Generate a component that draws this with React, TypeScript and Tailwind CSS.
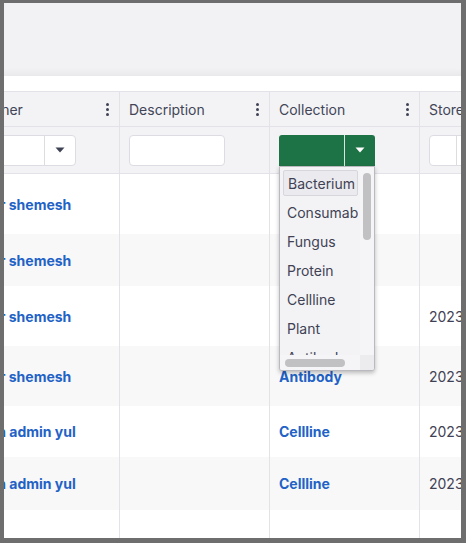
import React from "react";

const FONT = { fontFamily: "Inter, 'Liberation Sans', sans-serif" };

function Kebab() {
  return (
    <div className="flex flex-col gap-[2px] items-center mr-[10px]">
      <span className="w-[3px] h-[3px] rounded-full bg-[#3f4254]" />
      <span className="w-[3px] h-[3px] rounded-full bg-[#3f4254]" />
      <span className="w-[3px] h-[3px] rounded-full bg-[#3f4254]" />
    </div>
  );
}

function Caret({ color }: { color: string }) {
  return (
    <svg width="10" height="6" viewBox="0 0 10 6">
      <path d="M0.5 0.5 L9.5 0.5 L5 5.5 Z" fill={color} />
    </svg>
  );
}

const rows = [
  { owner: "Yair shemesh", coll: "", store: "", h: "h-[60px]", bg: "bg-white" },
  { owner: "Yair shemesh", coll: "", store: "", h: "h-[52px]", bg: "bg-[#f8f8f9]" },
  { owner: "Yair shemesh", coll: "", store: "2023-05-14", h: "h-[60px]", bg: "bg-white" },
  { owner: "Yair shemesh", coll: "Antibody", store: "2023-05-14", h: "h-[60px]", bg: "bg-[#f8f8f9]" },
  { owner: "Dan admin yul", coll: "Cellline", store: "2023-06-02", h: "h-[51px]", bg: "bg-white" },
  { owner: "Dan admin yul", coll: "Cellline", store: "2023-06-02", h: "h-[53px]", bg: "bg-[#f8f8f9]" },
  { owner: "", coll: "", store: "", h: "h-[40px]", bg: "bg-white" },
];

const items = ["Bacterium", "Consumable", "Fungus", "Protein", "Cellline", "Plant", "Antibody"];

export default function App() {
  return (
    <div className="w-[466px] h-[543px] bg-[#6e6e6e] pt-[3px] pl-[4px] pr-[5px] pb-[5px]" style={FONT}>
      <div className="w-full h-full bg-white overflow-hidden flex flex-col">
        <div className="h-[73px] shrink-0 bg-[#f2f2f4] flex flex-col justify-end">
          <div className="h-[8px] bg-gradient-to-b from-[#f2f2f4] to-[#e9e9ec]" />
        </div>
        <div className="h-[15px] shrink-0 bg-white" />
        <div className="ml-[-34px] w-[600px] flex flex-col">
          {/* header */}
          <div className="grid grid-cols-[150px_150px_150px_150px] h-[36px] border-t border-b border-[#e2e2e8] bg-[#f3f3f6] text-[14px] text-[#424556]">
            {["Owner", "Description", "Collection", "Stored at"].map((t) => (
              <div key={t} className="flex items-center justify-between pl-[9px] border-r border-[#e2e2e8]">
                <span className="whitespace-nowrap">{t}</span>
                <Kebab />
              </div>
            ))}
          </div>
          {/* filter row */}
          <div className="grid grid-cols-[150px_150px_150px_150px] h-[47px] border-b border-[#e2e2e8] bg-[#f3f3f6]">
            <div className="flex items-center pl-[9px] border-r border-[#e2e2e8]">
              <div className="w-[97px] h-[31px] bg-white border border-[#dcdce2] rounded-[4px] flex">
                <div className="flex-1 border-r border-[#dcdce2]" />
                <div className="w-[30px] flex items-center justify-center">
                  <Caret color="#3f4254" />
                </div>
              </div>
            </div>
            <div className="flex items-center pl-[9px] border-r border-[#e2e2e8]">
              <div className="w-[96px] h-[31px] bg-white border border-[#dcdce2] rounded-[4px]" />
            </div>
            <div className="flex items-center pl-[9px] border-r border-[#e2e2e8]">
              <div className="relative w-[96px] h-[31px]">
                <div className="w-full h-full bg-[#1e7346] rounded-t-[3px] flex">
                  <div className="flex-1 border-r border-[#d9e8df]" />
                  <div className="w-[30px] flex items-center justify-center">
                    <Caret color="#ffffff" />
                  </div>
                </div>
                <div className="absolute left-0 top-full w-[96px] h-[205px] z-10 bg-[#f3f3f6] border border-[#b9b9bf] rounded-b-[3px] shadow-[0_2px_4px_rgba(0,0,0,0.25)] overflow-hidden">
                  <div className="absolute left-[3px] top-[2px] w-[75px] h-[186px] overflow-hidden">
                    {items.map((it, i) => (
                      <div key={it} className="h-[29px] flex items-center">
                        <div
                          className={
                            "w-[110px] h-[26px] flex items-center pl-[4px] text-[14px] text-[#3f4254] whitespace-nowrap " +
                            (i === 0 ? "bg-[#ebebef] border border-[#d6d6dc] rounded-[2px] pl-[3px]" : "")
                          }
                        >
                          {it}
                        </div>
                      </div>
                    ))}
                  </div>
                  <div className="absolute right-0 top-0 w-[14px] h-[188px] bg-[#f5f5f7]">
                    <div className="absolute left-[3px] top-[6px] w-[8px] h-[67px] rounded-full bg-[#c1c1c4]" />
                  </div>
                  <div className="absolute left-0 bottom-0 w-[82px] h-[15px] bg-[#f5f5f7]">
                    <div className="absolute left-[5px] top-[4px] w-[60px] h-[8px] rounded-full bg-[#c1c1c4]" />
                  </div>
                  <div className="absolute right-0 bottom-0 w-[14px] h-[15px] bg-[#ececef]" />
                </div>
              </div>
            </div>
            <div className="flex items-center pl-[9px] border-r border-[#e2e2e8]">
              <div className="w-[96px] h-[31px] bg-white border border-[#dcdce2] rounded-[4px] flex">
                <div className="w-[27px] border-r border-[#dcdce2]" />
              </div>
            </div>
          </div>
          {/* data rows */}
          {rows.map((r, i) => (
            <div key={i} className={"grid grid-cols-[150px_150px_150px_150px] " + r.h + " " + r.bg}>
              <div className="flex items-center pl-[9px] border-r border-[#e2e2e8] text-[14px] font-bold text-[#2262c6] whitespace-nowrap">
                {r.owner}
              </div>
              <div className="border-r border-[#e2e2e8]" />
              <div className="flex items-center pl-[9px] border-r border-[#e2e2e8] text-[14px] font-bold text-[#2262c6] whitespace-nowrap">
                {r.coll}
              </div>
              <div className="flex items-center pl-[9px] border-r border-[#e2e2e8] text-[14px] text-[#3f4254] whitespace-nowrap">
                {r.store}
              </div>
            </div>
          ))}
        </div>
      </div>
    </div>
  );
}
